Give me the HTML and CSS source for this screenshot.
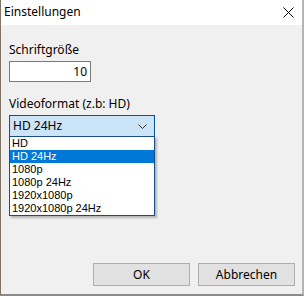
FILE: index.html
```html
<!DOCTYPE html>
<html lang="de">
<head>
<meta charset="utf-8">
<title>Einstellungen</title>
<link rel="stylesheet" href="styles.css">
</head>
<body>
<div class="window">
  <div class="titlebar">
    <span class="title">Einstellungen</span>
    <svg class="close" width="11" height="11" viewBox="0 0 11 11"><path d="M0.5 0.5 L10.5 10.5 M10.5 0.5 L0.5 10.5" stroke="#000" stroke-width="1" fill="none"/></svg>
  </div>
  <div class="content">
    <div class="label label-first">Schriftgröße</div>
    <div class="input">10</div>
    <div class="label label-second">Videoformat (z.b: HD)</div>
    <div class="combo-wrap">
      <div class="combo">
        <span class="combo-text">HD 24Hz</span>
        <svg class="chevron" width="9" height="5" viewBox="0 0 9 5"><path d="M0.5 0.5 L4.5 4.5 L8.5 0.5" stroke="#333" stroke-width="1" fill="none"/></svg>
      </div>
      <ul class="list">
        <li>HD</li>
        <li class="selected">HD 24Hz</li>
        <li>1080p</li>
        <li>1080p 24Hz</li>
        <li>1920x1080p</li>
        <li>1920x1080p 24Hz</li>
      </ul>
    </div>
    <div class="buttons">
      <div class="btn">OK</div>
      <div class="btn">Abbrechen</div>
    </div>
  </div>
</div>
</body>
</html>
```

FILE: styles.css
```css
* { box-sizing: border-box; }
html, body {
  margin: 0;
  padding: 0;
  width: 304px;
  height: 296px;
  overflow: hidden;
  background: #6f6a5e;
}
.window {
  width: 304px;
  height: 296px;
  border-left: 1px solid #7d7463;
  border-right: 2px solid #b4b4b4;
  border-bottom: 2px solid #8a8a8a;
  background: #f0f0f0;
  display: flex;
  flex-direction: column;
  font-family: "Noto Sans", sans-serif;
  font-size: 12px;
  color: #000;
}
.titlebar {
  height: 25px;
  background: #fff;
  display: flex;
  align-items: center;
  justify-content: space-between;
  padding: 0 8px 1px 3px;
}
.title { line-height: 16px; }
.close { display: block; }
.content {
  flex: 1;
  display: flex;
  flex-direction: column;
  padding: 0 7px 8px 8px;
}
.label { line-height: 16px; height: 16px; }
.label-first { margin-top: 17px; }
.label-second { margin-top: 14px; }
.input {
  margin-top: 3px;
  width: 82px;
  height: 21px;
  background: #fff;
  border: 1px solid #7a7a7a;
  text-align: right;
  padding: 0 3px;
  line-height: 19px;
}
.combo-wrap {
  position: relative;
  margin-top: 3px;
  width: 146px;
}
.combo {
  height: 22px;
  background: #cce4f7;
  border: 1px solid #005499;
  display: flex;
  align-items: center;
  justify-content: space-between;
  padding: 0 7px 0 3px;
}
.combo-text { line-height: 16px; }
.chevron { display: block; }
.list {
  position: absolute;
  left: 0;
  top: 21px;
  width: 146px;
  margin: 0;
  padding: 0;
  list-style: none;
  background: #fff;
  border: 1px solid #1a4c86;
  box-shadow: 2px 2px 2px rgba(0,0,0,0.25);
  font-family: "Liberation Sans", Arial, sans-serif;
  font-size: 11px;
}
.list li {
  height: 13px;
  line-height: 13px;
  padding-left: 2px;
}
.list li.selected {
  background: #0078d7;
  color: #fff;
}
.buttons {
  margin-top: auto;
  display: flex;
  justify-content: flex-end;
  gap: 8px;
}
.btn {
  width: 97px;
  height: 23px;
  background: #e1e1e1;
  border: 1px solid #adadad;
  text-align: center;
  line-height: 21px;
}
```
